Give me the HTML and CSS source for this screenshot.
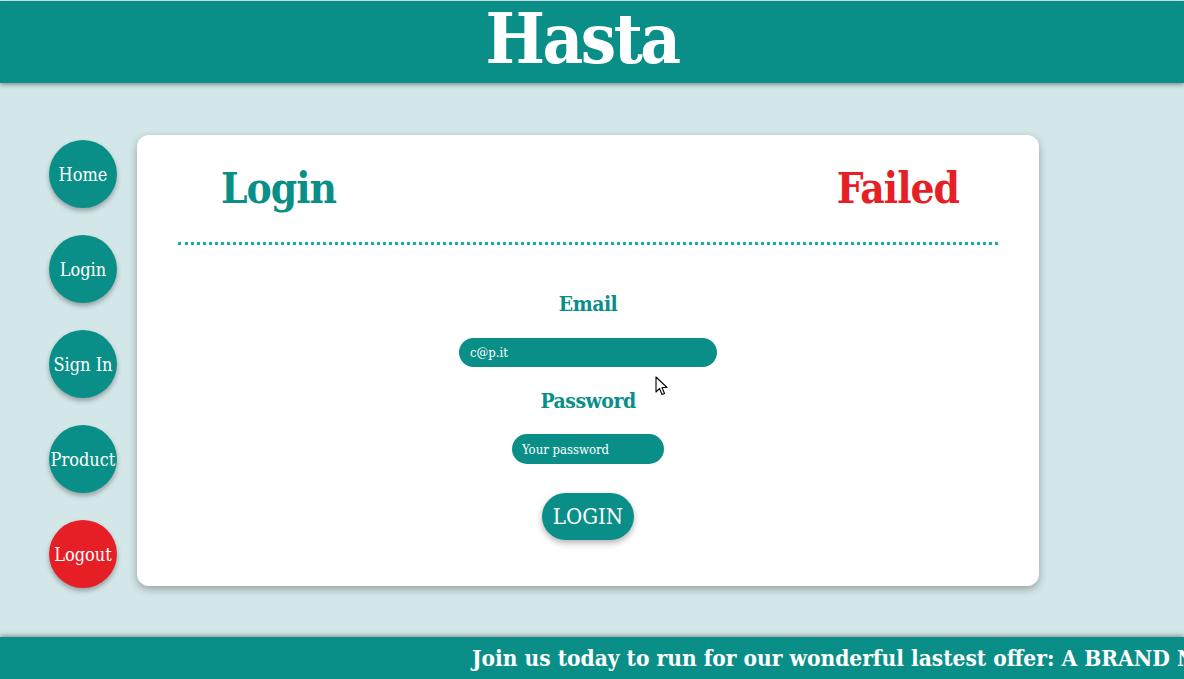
FILE: index.html
```html
<!DOCTYPE html>
<html lang="en">
<head>
<meta charset="utf-8">
<title>Hasta</title>
<link rel="stylesheet" href="styles.css">
</head>
<body>
<header class="top">
  <h1 class="brand">Hasta</h1>
</header>
<main class="main">
  <nav class="side">
    <a class="pill" href="#">Home</a>
    <a class="pill" href="#">Login</a>
    <a class="pill" href="#">Sign In</a>
    <a class="pill" href="#">Product</a>
    <a class="pill pill-red" href="#">Logout</a>
  </nav>
  <section class="card">
    <div class="card-head">
      <h2 class="title">Login</h2>
      <h2 class="title title-red">Failed</h2>
    </div>
    <div class="divider"></div>
    <form class="form">
      <label class="label" for="email">Email</label>
      <input class="field field-email" id="email" type="text" value="c@p.it">
      <label class="label label-pw" for="pw">Password</label>
      <input class="field field-pw" id="pw" type="password" placeholder="Your password">
      <button class="btn" type="button">LOGIN</button>
    </form>
  </section>
</main>
<footer class="bottom">
  <p class="ticker">Join us today to run for our wonderful lastest offer: A BRAND NEW PAIR OF SHOES</p>
</footer>
<svg class="cursor" width="14" height="20" viewBox="0 0 14 20"><path d="M1 1 L1 16 L4.5 12.5 L7 18.5 L9.5 17.5 L7 11.5 L12 11.5 Z" fill="#fff" stroke="#000" stroke-width="1.1" stroke-linejoin="round"/></svg>
</body>
</html>
```
FILE: styles.css
```css
* { box-sizing: border-box; }
html, body { margin: 0; padding: 0; }
body {
  width: 1184px;
  height: 679px;
  overflow: hidden;
  background: #d3e7e9;
  font-family: "DejaVu Serif Condensed", "DejaVu Serif", serif;
  display: flex;
  flex-direction: column;
  position: relative;
}
.top {
  height: 82px;
  margin-top: 1px;
  background: #0a8f88;
  box-shadow: 0 2px 4px rgba(0,0,0,0.35);
  display: flex;
  justify-content: center;
  align-items: center;
  position: relative;
  z-index: 2;
}
.brand {
  margin: 0;
  color: #fff;
  font-size: 70px;
  font-weight: bold;
  line-height: 76px;
  letter-spacing: -2.5px;
  padding-bottom: 6px;
  padding-right: 20px;
}
.main {
  display: flex;
  align-items: flex-start;
  padding-top: 52px;
  padding-left: 49px;
}
.side {
  display: flex;
  flex-direction: column;
  gap: 27px;
  margin-top: 5px;
  width: 68px;
}
.pill {
  width: 68px;
  height: 68px;
  border-radius: 50%;
  background: #0a8f88;
  color: #fff;
  text-decoration: none;
  display: flex;
  justify-content: center;
  align-items: center;
  font-size: 18px;
  white-space: nowrap;
  box-shadow: 0 3px 5px rgba(0,0,0,0.3);
}
.pill-red { background: #e61e26; }
.card {
  margin-left: 20px;
  width: 902px;
  height: 451px;
  background: #fff;
  border-radius: 12px;
  box-shadow: 0 3px 8px rgba(0,0,0,0.3);
  padding: 0 41px;
}
.card-head {
  display: flex;
  justify-content: space-between;
  padding: 33px 39px 0 43px;
  height: 107px;
}
.title {
  margin: 0;
  font-size: 42px;
  font-weight: bold;
  color: #0a8f88;
  letter-spacing: -1px;
  line-height: 1;
}
.title-red { color: #e61e26; }
.divider {
  border-top: 3px dotted #13aea7;
}
.form {
  display: flex;
  flex-direction: column;
  align-items: center;
  padding-top: 47px;
}
.label {
  font-size: 21px;
  font-weight: bold;
  color: #0a8f88;
  line-height: 24px;
  letter-spacing: -0.5px;
}
.label-pw { margin-top: 22px; }
.field {
  border: none;
  outline: none;
  background: #0a8f88;
  color: #fff;
  border-radius: 15px;
  font-family: "DejaVu Serif Condensed", "DejaVu Serif", serif;
  font-size: 13px;
  padding: 0 11px;
}
.field::placeholder { color: #fff; opacity: 1; }
.field-email {
  margin-top: 22px;
  width: 258px;
  height: 29px;
}
.field-pw {
  margin-top: 21px;
  width: 152px;
  height: 30px;
  font-size: 13px;
  padding: 0 10px;
}
.btn {
  margin-top: 29px;
  width: 92px;
  height: 47px;
  border: none;
  border-radius: 24px;
  background: #0a8f88;
  color: #fff;
  font-family: "DejaVu Serif Condensed", "DejaVu Serif", serif;
  font-size: 22px;
  padding: 0;
  box-shadow: 0 3px 6px rgba(0,0,0,0.3);
}
.bottom {
  margin-top: auto;
  height: 42px;
  background: #0a8f88;
  box-shadow: 0 -2px 4px rgba(0,0,0,0.3);
  overflow: hidden;
  display: flex;
  align-items: center;
}
.ticker {
  margin: 0;
  padding-left: 472px;
  white-space: nowrap;
  color: #fff;
  font-weight: bold;
  font-size: 22.5px;
}
.cursor {
  position: absolute;
  left: 655px;
  top: 376px;
}
```
